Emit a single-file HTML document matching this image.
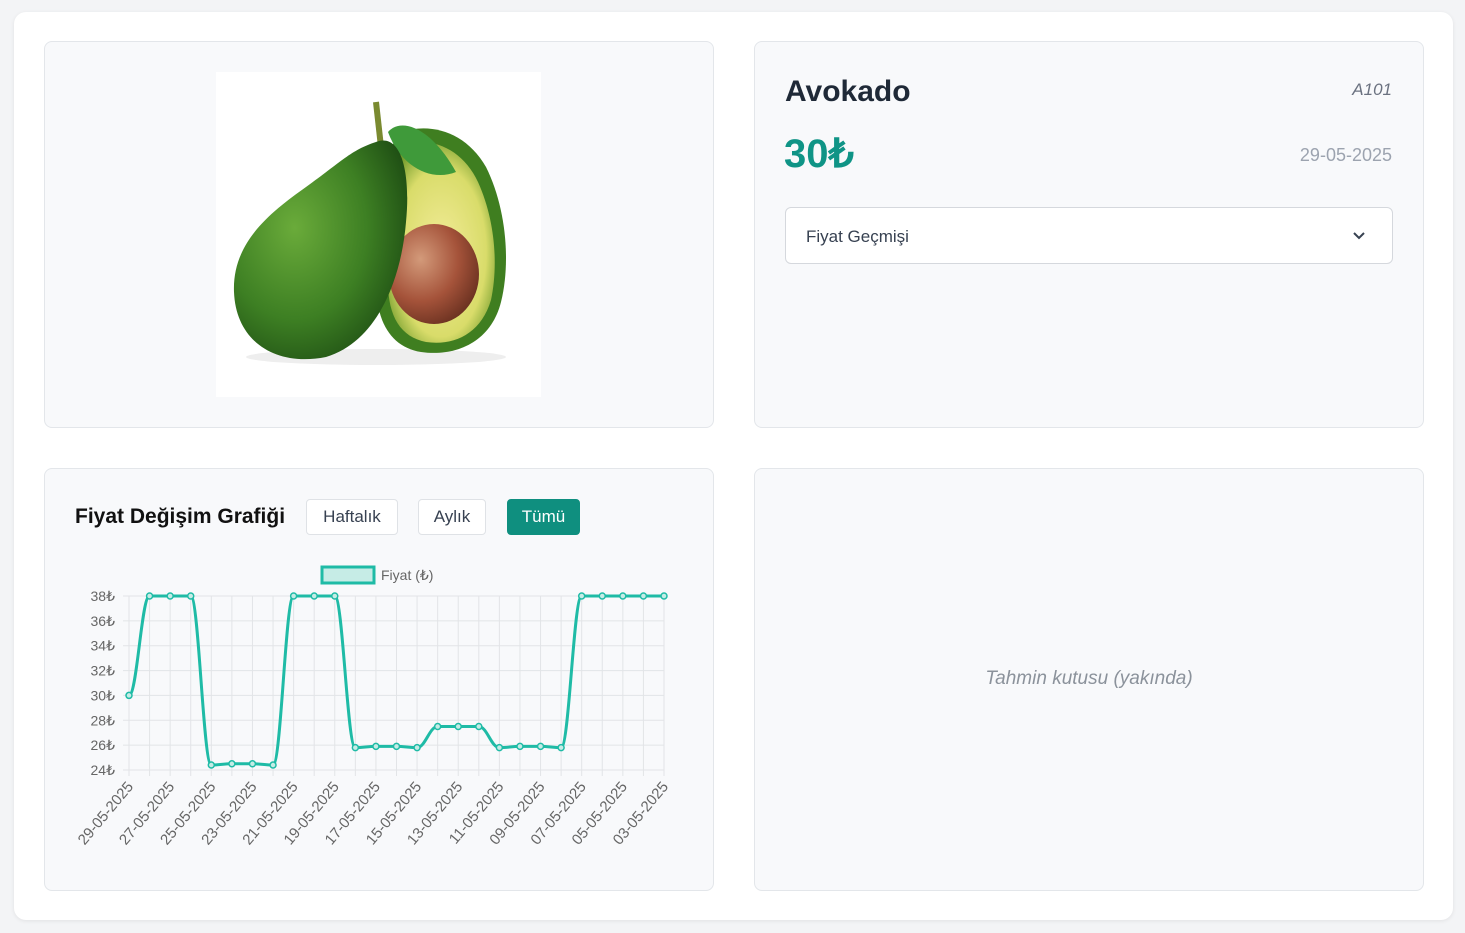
<!DOCTYPE html>
<html><head><meta charset="utf-8">
<style>
*{box-sizing:border-box;margin:0;padding:0}
body{width:1465px;height:933px;background:#f3f4f6;font-family:"Liberation Sans",sans-serif;position:relative;overflow:hidden}
.outer{position:absolute;left:14px;top:12px;width:1439px;height:908px;background:#fff;border-radius:12px;box-shadow:0 1px 4px rgba(0,0,0,.08)}
.p{position:absolute;background:#f8f9fb;border:1px solid #e3e6ea;border-radius:8px}
.btn{position:absolute;top:499px;height:36px;border:1px solid #dfe2e6;background:#fff;border-radius:4px;font-size:17px;color:#374151;display:flex;align-items:center;justify-content:center}
</style></head><body>
<div class="outer"></div>
<div class="p" style="left:44px;top:41px;width:670px;height:387px"></div>
<div style="position:absolute;left:216px;top:72px;width:325px;height:325px;background:#fff">
<svg width="325" height="325" viewBox="0 0 325 325">
<defs>
<radialGradient id="sk" cx="35%" cy="40%" r="70%"><stop offset="0" stop-color="#6aab3a"/><stop offset=".6" stop-color="#3d7f23"/><stop offset="1" stop-color="#1f4f14"/></radialGradient>
<radialGradient id="fl" cx="50%" cy="55%" r="60%"><stop offset="0" stop-color="#f3ec9a"/><stop offset=".7" stop-color="#d9dc6a"/><stop offset="1" stop-color="#6f9a2a"/></radialGradient>
<radialGradient id="pt" cx="35%" cy="35%" r="70%"><stop offset="0" stop-color="#d39a7a"/><stop offset=".6" stop-color="#a5533a"/><stop offset="1" stop-color="#6e3322"/></radialGradient>
</defs>
<ellipse cx="160" cy="285" rx="130" ry="8" fill="#eee"/>
<path d="M185 60 C215 50 250 60 270 95 C290 135 295 190 285 230 C275 270 240 285 205 280 C175 275 160 250 160 210 C160 150 160 90 185 60Z" fill="#3f7e20"/>
<path d="M192 72 C220 65 248 80 262 110 C280 150 282 195 275 228 C265 262 238 274 210 270 C185 265 172 245 172 210 C172 150 170 95 192 72Z" fill="url(#fl)"/>
<ellipse cx="218" cy="202" rx="45" ry="50" fill="url(#pt)"/>
<path d="M160 30 L165 75" stroke="#7a8a30" stroke-width="6"/>
<path d="M172 60 C185 45 215 55 240 100 C215 110 185 95 172 60Z" fill="#3f9a3a"/>
<path d="M160 70 C185 60 195 100 190 150 C185 210 160 270 110 285 C60 295 20 270 18 220 C16 170 55 140 90 115 C125 90 135 78 160 70Z" fill="url(#sk)"/>
</svg></div>

<div class="p" style="left:754px;top:41px;width:670px;height:387px"></div>
<div style="position:absolute;left:785px;top:75px;font-size:30px;font-weight:bold;color:#1f2937">Avokado</div>
<div style="position:absolute;right:73px;top:80px;font-size:17px;font-style:italic;color:#6b7280">A101</div>
<div style="position:absolute;left:784px;top:131px;font-size:40px;font-weight:bold;color:#0f9486">30₺</div>
<div style="position:absolute;right:73px;top:145px;font-size:18px;color:#9ca3af">29-05-2025</div>
<div style="position:absolute;left:785px;top:207px;width:608px;height:57px;background:#fff;border:1px solid #d5d8dd;border-radius:6px">
<span style="position:absolute;left:20px;top:19px;font-size:17px;color:#374151">Fiyat Geçmişi</span>
<svg style="position:absolute;right:26px;top:23px" width="14" height="10" viewBox="0 0 14 10"><path d="M2 2 L7 7 L12 2" fill="none" stroke="#374151" stroke-width="2"/></svg>
</div>

<div class="p" style="left:44px;top:468px;width:670px;height:423px"></div>
<div style="position:absolute;left:75px;top:505px;font-size:21px;font-weight:bold;color:#111">Fiyat Değişim Grafiği</div>
<div class="btn" style="left:306px;width:92px">Haftalık</div>
<div class="btn" style="left:418px;width:68px">Aylık</div>
<div class="btn" style="left:507px;width:73px;background:#0f8f7f;border-color:#0f8f7f;color:#fff">Tümü</div>
<svg id="ch" style="position:absolute;left:0;top:0" width="720" height="880"></svg>

<div class="p" style="left:754px;top:468px;width:670px;height:423px"></div>
<div style="position:absolute;left:754px;width:670px;top:668px;text-align:center;font-size:19px;font-style:italic;color:#8b929b">Tahmin kutusu (yakında)</div>
<script>
var v=[30,38,38,38,24.4,24.5,24.5,24.4,38,38,38,25.8,25.9,25.9,25.8,27.5,27.5,27.5,25.8,25.9,25.9,25.8,38,38,38,38,38];
var x0=129,dx=(664-129)/26,Y=function(p){return 770-(p-24)*174/14};
var s='';
for(var i=0;i<=26;i++){var x=x0+i*dx;s+='<line x1="'+x+'" y1="596" x2="'+x+'" y2="776" stroke="#e2e4e7"/>';}
for(var k=24;k<=38;k+=2){var y=Y(k);s+='<line x1="123" y1="'+y+'" x2="664" y2="'+y+'" stroke="#e2e4e7"/><text x="115" y="'+(y+5)+'" text-anchor="end" font-size="14" fill="#666" font-family="Liberation Sans">'+k+'₺</text>';}
var pts=v.map(function(p,i){return [x0+i*dx,Y(p)]});
var d='M'+pts[0][0]+' '+pts[0][1];
for(var i=1;i<pts.length;i++){var a=pts[i-1],b=pts[i],t=dx*0.4;d+=' C'+(a[0]+t)+' '+a[1]+' '+(b[0]-t)+' '+b[1]+' '+b[0]+' '+b[1];}
s+='<path d="'+d+'" fill="none" stroke="#1fbba6" stroke-width="3"/>';
pts.forEach(function(p){s+='<circle cx="'+p[0]+'" cy="'+p[1]+'" r="3" fill="#c6ece6" stroke="#1fbba6" stroke-width="1.5"/>';});
for(var i=0;i<=26;i+=2){var x=x0+i*dx;var day=29-i;var lb=(day<10?'0':'')+day+'-05-2025';s+='<text transform="translate('+(x+5)+',787) rotate(-50)" text-anchor="end" font-size="15" fill="#666" font-family="Liberation Sans">'+lb+'</text>';}
s+='<rect x="322" y="567" width="52" height="16" fill="#c6ece6" stroke="#1fbba6" stroke-width="3"/><text x="381" y="580" font-size="14" fill="#666" font-family="Liberation Sans">Fiyat (₺)</text>';
document.getElementById('ch').innerHTML=s;
</script>
</body></html>
